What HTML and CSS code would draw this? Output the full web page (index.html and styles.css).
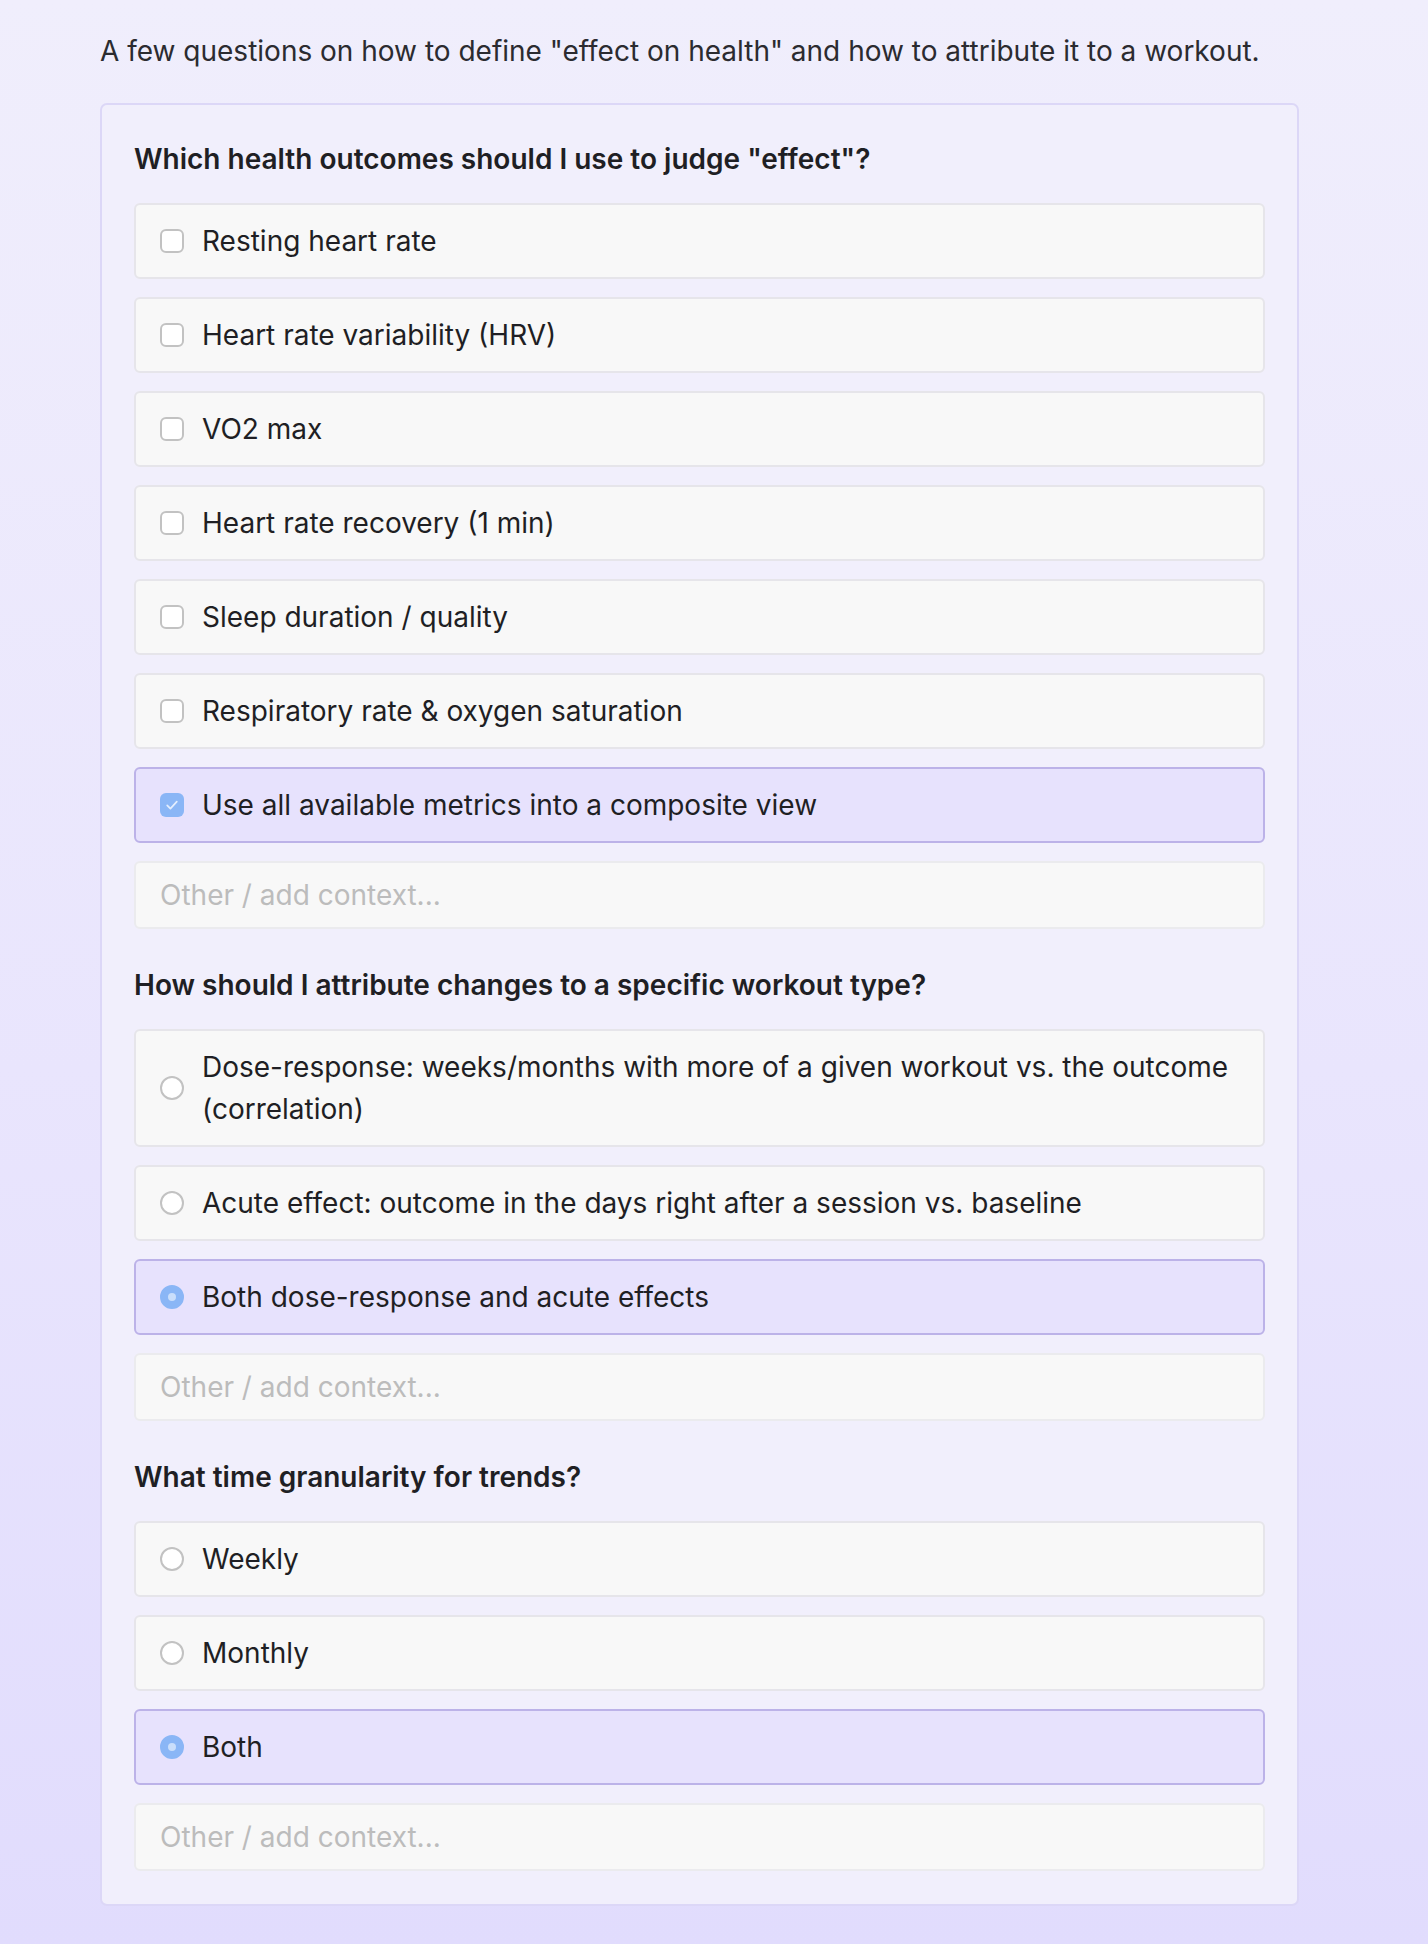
FILE: index.html
```html
<!DOCTYPE html>
<html lang="en">
<head>
<meta charset="utf-8">
<title>Questions</title>
<link rel="stylesheet" href="styles.css">
</head>
<body>
<main class="page">
  <p class="intro">A few questions on how to define "effect on health" and how to attribute it to a workout.</p>
  <section class="card">
    <div class="question">
      <h2 class="q-title">Which health outcomes should I use to judge "effect"?</h2>
      <div class="options">
        <label class="option"><span class="box"></span><span class="label">Resting heart rate</span></label>
        <label class="option"><span class="box"></span><span class="label">Heart rate variability (HRV)</span></label>
        <label class="option"><span class="box"></span><span class="label">VO2 max</span></label>
        <label class="option"><span class="box"></span><span class="label">Heart rate recovery (1 min)</span></label>
        <label class="option"><span class="box"></span><span class="label">Sleep duration / quality</span></label>
        <label class="option"><span class="box"></span><span class="label">Respiratory rate &amp; oxygen saturation</span></label>
        <label class="option selected"><span class="box checked"><svg viewBox="0 0 24 24" width="24" height="24"><path d="M7.2 12.4l3.2 3.2 6.4-7" fill="none" stroke="#e4eefe" stroke-width="1.7" stroke-linecap="round" stroke-linejoin="round"/></svg></span><span class="label">Use all available metrics into a composite view</span></label>
        <div class="other">Other / add context...</div>
      </div>
    </div>
    <div class="question">
      <h2 class="q-title">How should I attribute changes to a specific workout type?</h2>
      <div class="options">
        <label class="option"><span class="radio"></span><span class="label">Dose-response: weeks/months with more of a given workout vs. the outcome (correlation)</span></label>
        <label class="option"><span class="radio"></span><span class="label">Acute effect: outcome in the days right after a session vs. baseline</span></label>
        <label class="option selected"><span class="radio on"></span><span class="label">Both dose-response and acute effects</span></label>
        <div class="other">Other / add context...</div>
      </div>
    </div>
    <div class="question">
      <h2 class="q-title">What time granularity for trends?</h2>
      <div class="options">
        <label class="option"><span class="radio"></span><span class="label">Weekly</span></label>
        <label class="option"><span class="radio"></span><span class="label">Monthly</span></label>
        <label class="option selected"><span class="radio on"></span><span class="label">Both</span></label>
        <div class="other">Other / add context...</div>
      </div>
    </div>
  </section>
</main>
</body>
</html>
```

FILE: styles.css
```css
html, body {
  margin: 0;
  padding: 0;
}
body {
  min-height: 1944px;
  background: linear-gradient(180deg, #f0eefc 0%, #e9e5fd 55%, #e1dcfd 100%);
  font-family: Inter, "Noto Sans", "Liberation Sans", sans-serif;
  color: #1f1f24;
}
.page {
  padding: 30px 0 40px 100px;
  width: 1199px;
}
.intro {
  margin: 0 0 31px 0;
  font-size: 28px;
  line-height: 42px;
  color: #2b2b30;
}
.card {
  border: 2px solid #dcd7f7;
  border-radius: 7px;
  background: #f1effc;
  padding: 34px 32px 33px 32px;
  display: flex;
  flex-direction: column;
  gap: 36px;
}
.q-title {
  margin: 0 0 24px 0;
  font-size: 28px;
  line-height: 40px;
  font-weight: 600;
  color: #1f1f24;
}
.options {
  display: flex;
  flex-direction: column;
  gap: 18px;
}
.option {
  display: flex;
  align-items: center;
  gap: 18px;
  padding: 15px 24px 15px 24px;
  border: 2px solid #e6e5ea;
  border-radius: 6px;
  background: #f8f8f8;
  font-size: 28px;
  line-height: 42px;
  color: #1f1f24;
}
.option.selected {
  background: #e7e2fd;
  border-color: #bcb2e8;
}
.box {
  flex: none;
  width: 24px;
  height: 24px;
  box-sizing: border-box;
  border: 2px solid #c2c2c2;
  border-radius: 6px;
  background: #fff;
  display: flex;
}
.box.checked {
  border: none;
  background: #8ab6f6;
}
.radio {
  flex: none;
  width: 24px;
  height: 24px;
  box-sizing: border-box;
  border: 2px solid #c2c2c2;
  border-radius: 50%;
  background: #fff;
}
.radio.on {
  border: 8px solid #8ab6f6;
  background: #c9defb;
}
.other {
  padding: 10px 24px;
  border: 2px solid #ebebee;
  border-radius: 6px;
  background: #f8f8f8;
  font-size: 28px;
  line-height: 44px;
  color: #bcbcbc;
}
```
